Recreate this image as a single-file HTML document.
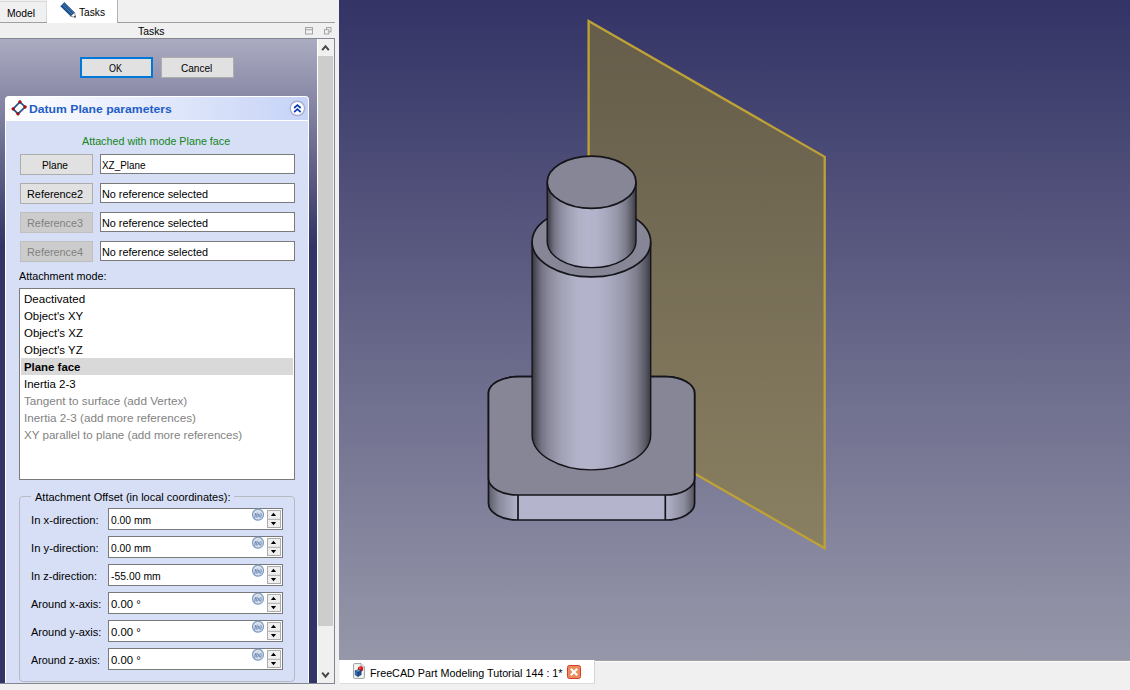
<!DOCTYPE html>
<html>
<head>
<meta charset="utf-8">
<title>FreeCAD</title>
<style>
html,body{margin:0;padding:0;}
body{width:1130px;height:690px;overflow:hidden;background:#f0f0f0;position:relative;
  font-family:"Liberation Sans",sans-serif;font-size:11px;color:#000;}
.abs{position:absolute;}
.t{position:absolute;white-space:nowrap;line-height:14px;height:14px;transform-origin:0 0;}
#tabModel{left:0;top:1px;width:47px;height:21px;border-top:1px solid #d9d9d9;border-right:1px solid #d9d9d9;box-sizing:border-box;background:#f0f0f0;}
#tabTasks{left:47px;top:0;width:70px;height:23px;background:#fff;}
#tabLine{left:0;top:22px;width:336px;height:1px;background:#a0a0a0;}
#scroll{left:0;top:38px;width:335px;height:646px;box-sizing:border-box;border:1px solid #828790;border-left:none;overflow:hidden;
  background:linear-gradient(to bottom,#ababc1 0px,#333365 207px,#333365 100%);}
#sbar{left:317px;top:39px;width:17px;height:644px;background:#f0f0f0;border-left:1px solid #fff;box-sizing:border-box;}
#thumb{left:318px;top:56px;width:15px;height:570px;background:#cdcdcd;}
.btn{position:absolute;box-sizing:border-box;background:#e1e1e1;border:1px solid #adadad;height:21px;width:73px;}
.btn.def{border:2px solid #0078d7;}
.btn.dis{background:#cccccc;border-color:#bfbfbf;}
.inp{position:absolute;box-sizing:border-box;background:#fff;border:1px solid #7a7a7a;height:20px;left:100px;width:195px;}
#hdr{left:5px;top:96px;width:304px;height:24px;box-sizing:border-box;border:1px solid #fff;border-bottom:none;border-radius:4px 4px 0 0;background:linear-gradient(to right,#ffffff 0%,#c6d3f7 100%);}
#hdrline{left:5px;top:120px;width:304px;height:1px;background:#fff;}
#box{left:5px;top:121px;width:304px;height:570px;box-sizing:border-box;background:#d6dff5;border-left:1px solid #fff;border-right:1px solid #fff;}
#list{left:19px;top:288px;width:276px;height:192px;box-sizing:border-box;border:1px solid #7a7a7a;background:#fff;}
#sel{left:21px;top:358px;width:272px;height:17px;background:#d9d9d9;}
#grp{left:19px;top:496px;width:276px;height:186px;box-sizing:border-box;border:1px solid #b8bac2;border-radius:4px;}
#grpgap{left:31px;top:496px;width:203px;height:1px;background:#d6dff5;}
.spin{position:absolute;left:108px;width:175px;height:22px;box-sizing:border-box;border:1px solid #7a7a7a;background:#fff;}
#view{left:339px;top:0;width:791px;height:660px;background:linear-gradient(to bottom,#333366 0%,#9797aa 100%);}
#doctab{left:339px;top:660px;width:256px;height:24px;background:#fff;border-left:1px solid #f7f7f7;border-right:1px solid #d4d4d4;border-bottom:1px solid #dcdcdc;box-sizing:border-box;}
</style>
</head>
<body>
<div class="abs" id="tabLine"></div>
<div class="abs" id="tabModel"></div>
<div class="abs" id="tabTasks"></div>
<div class="abs" style="left:117px;top:0px;width:1px;height:22px;background:#b2b2b2"></div>

<div class="abs" id="scroll"></div>
<div class="abs" id="sbar"></div>
<div class="abs" id="thumb"></div>

<div class="btn def" style="left:80px;top:57px;"></div>
<div class="btn" style="left:161px;top:57px;"></div>

<div class="abs" id="hdr"></div>
<div class="abs" id="hdrline"></div>
<div class="abs" id="box"></div>

<div class="btn" style="left:20px;top:154px;"></div>
<div class="inp" style="top:154px;"></div>
<div class="btn" style="left:20px;top:183px;"></div>
<div class="inp" style="top:183px;"></div>
<div class="btn dis" style="left:20px;top:212px;"></div>
<div class="inp" style="top:212px;"></div>
<div class="btn dis" style="left:20px;top:241px;"></div>
<div class="inp" style="top:241px;"></div>

<div class="abs" id="list"></div>
<div class="abs" id="sel"></div>

<div class="abs" id="grp"></div>
<div class="abs" id="grpgap"></div>
<div class="spin" style="top:508px;"></div>
<div class="spin" style="top:536px;"></div>
<div class="spin" style="top:564px;"></div>
<div class="spin" style="top:592px;"></div>
<div class="spin" style="top:620px;"></div>
<div class="spin" style="top:648px;"></div>
<svg class="abs" style="left:0;top:0;" width="339" height="690" viewBox="0 0 339 690">
<g>
<polygon points="64.4,2.3 60.3,6.2 70.6,16.3 74.6,12.4" fill="#1f4e88"/>
<polygon points="64.4,2.3 63.2,3.4 73.4,13.6 74.6,12.4" fill="#3d6a9c"/>
<line x1="62.4" y1="4.6" x2="72.5" y2="14.5" stroke="#4a88d4" stroke-width="1"/>
<polygon points="70.6,16.3 74.6,12.4 75.6,17.4" fill="#ffffff" stroke="#22324c" stroke-width="0.5"/>
<polygon points="73.9,16.9 75.2,15.6 75.6,17.4" fill="#101828"/>
</g>
<g fill="none" stroke="#a4a4a4" stroke-width="1">
<rect x="305.5" y="27.5" width="7" height="6.5"/><line x1="305.5" y1="29.7" x2="312.5" y2="29.7"/>
<rect x="326.5" y="27.5" width="4.5" height="4.3"/><rect x="324.5" y="29.7" width="4.3" height="4.3" fill="#f0f0f0"/>
</g>
<g fill="none" stroke="#454545" stroke-width="2" stroke-linejoin="miter">
<polyline points="322.2,50.2 325.5,46.2 328.8,50.2"/>
<polyline points="322.2,672.6 325.5,676.6 328.8,672.6"/>
</g>
<g>
<polygon points="19.9,101.9 25.1,107 18,113.9 13.1,108.9" fill="#ffffff" stroke="#3b74b4" stroke-width="1.65"/>
<polygon points="19.9,101.9 25.1,107 18,113.9 13.1,108.9" fill="none" stroke="#1b2c50" stroke-width="1.65" stroke-dasharray="0.5 0.7"/>
<g fill="#e00808" stroke="#3a1010" stroke-width="0.4"><circle cx="19.9" cy="101.9" r="1.4"/><circle cx="25.1" cy="107" r="1.4"/><circle cx="18" cy="113.9" r="1.4"/><circle cx="13.1" cy="108.9" r="1.4"/></g>
</g>
<g>
<circle cx="297.4" cy="108.35" r="7.2" fill="#ffffff" stroke="#a6aed0" stroke-width="1.5"/>
<g fill="none" stroke="#0a3ab0" stroke-width="1.7"><polyline points="294.1,108 297.4,105.1 300.7,108"/><polyline points="294.1,112.1 297.4,109.2 300.7,112.1"/></g>
</g>
<g>
<rect x="267.5" y="510.5" width="13" height="17" fill="#efefef" stroke="#adadad"/><line x1="267.5" y1="519.3" x2="280.5" y2="519.3" stroke="#adadad"/>
<polygon points="270.9,516 276.1,516 273.5,512.8" fill="#000"/>
<polygon points="270.9,522 276.1,522 273.5,525.2" fill="#000"/>
<circle cx="258" cy="514.65" r="5.5" fill="#d9dfe4" stroke="#789ac6" stroke-width="1.15"/>
<text x="258" y="516.8" text-anchor="middle" font-family="Liberation Serif, serif" font-style="italic" font-weight="bold" font-size="6.6" fill="#2456b0" textLength="7.6" lengthAdjust="spacingAndGlyphs">f(x)</text>
</g>
<g>
<rect x="267.5" y="538.5" width="13" height="17" fill="#efefef" stroke="#adadad"/><line x1="267.5" y1="547.3" x2="280.5" y2="547.3" stroke="#adadad"/>
<polygon points="270.9,544 276.1,544 273.5,540.8" fill="#000"/>
<polygon points="270.9,550 276.1,550 273.5,553.2" fill="#000"/>
<circle cx="258" cy="542.65" r="5.5" fill="#d9dfe4" stroke="#789ac6" stroke-width="1.15"/>
<text x="258" y="544.8" text-anchor="middle" font-family="Liberation Serif, serif" font-style="italic" font-weight="bold" font-size="6.6" fill="#2456b0" textLength="7.6" lengthAdjust="spacingAndGlyphs">f(x)</text>
</g>
<g>
<rect x="267.5" y="566.5" width="13" height="17" fill="#efefef" stroke="#adadad"/><line x1="267.5" y1="575.3" x2="280.5" y2="575.3" stroke="#adadad"/>
<polygon points="270.9,572 276.1,572 273.5,568.8" fill="#000"/>
<polygon points="270.9,578 276.1,578 273.5,581.2" fill="#000"/>
<circle cx="258" cy="570.65" r="5.5" fill="#d9dfe4" stroke="#789ac6" stroke-width="1.15"/>
<text x="258" y="572.8" text-anchor="middle" font-family="Liberation Serif, serif" font-style="italic" font-weight="bold" font-size="6.6" fill="#2456b0" textLength="7.6" lengthAdjust="spacingAndGlyphs">f(x)</text>
</g>
<g>
<rect x="267.5" y="594.5" width="13" height="17" fill="#efefef" stroke="#adadad"/><line x1="267.5" y1="603.3" x2="280.5" y2="603.3" stroke="#adadad"/>
<polygon points="270.9,600 276.1,600 273.5,596.8" fill="#000"/>
<polygon points="270.9,606 276.1,606 273.5,609.2" fill="#000"/>
<circle cx="258" cy="598.65" r="5.5" fill="#d9dfe4" stroke="#789ac6" stroke-width="1.15"/>
<text x="258" y="600.8" text-anchor="middle" font-family="Liberation Serif, serif" font-style="italic" font-weight="bold" font-size="6.6" fill="#2456b0" textLength="7.6" lengthAdjust="spacingAndGlyphs">f(x)</text>
</g>
<g>
<rect x="267.5" y="622.5" width="13" height="17" fill="#efefef" stroke="#adadad"/><line x1="267.5" y1="631.3" x2="280.5" y2="631.3" stroke="#adadad"/>
<polygon points="270.9,628 276.1,628 273.5,624.8" fill="#000"/>
<polygon points="270.9,634 276.1,634 273.5,637.2" fill="#000"/>
<circle cx="258" cy="626.65" r="5.5" fill="#d9dfe4" stroke="#789ac6" stroke-width="1.15"/>
<text x="258" y="628.8" text-anchor="middle" font-family="Liberation Serif, serif" font-style="italic" font-weight="bold" font-size="6.6" fill="#2456b0" textLength="7.6" lengthAdjust="spacingAndGlyphs">f(x)</text>
</g>
<g>
<rect x="267.5" y="650.5" width="13" height="17" fill="#efefef" stroke="#adadad"/><line x1="267.5" y1="659.3" x2="280.5" y2="659.3" stroke="#adadad"/>
<polygon points="270.9,656 276.1,656 273.5,652.8" fill="#000"/>
<polygon points="270.9,662 276.1,662 273.5,665.2" fill="#000"/>
<circle cx="258" cy="654.65" r="5.5" fill="#d9dfe4" stroke="#789ac6" stroke-width="1.15"/>
<text x="258" y="656.8" text-anchor="middle" font-family="Liberation Serif, serif" font-style="italic" font-weight="bold" font-size="6.6" fill="#2456b0" textLength="7.6" lengthAdjust="spacingAndGlyphs">f(x)</text>
</g>
</svg>

<div class="t" id="t1" style="left:7px;top:6px;font-size:11px;transform:scaleX(0.94);">Model</div>
<div class="t" id="t2" style="left:79px;top:5px;font-size:11px;transform:scaleX(0.925);">Tasks</div>
<div class="t" id="t3" style="left:138.2px;top:24px;font-size:11px;transform:scaleX(0.945);">Tasks</div>
<div class="t" id="t4" style="left:109px;top:61px;font-size:11px;transform:scaleX(0.815);">OK</div>
<div class="t" id="t5" style="left:181px;top:61px;font-size:11px;transform:scaleX(0.915);">Cancel</div>
<div class="t" id="t6" style="left:28.6px;top:102px;font-size:11px;transform:scaleX(1.107);font-weight:bold;color:#215dc6;">Datum Plane parameters</div>
<div class="t" id="t7" style="left:82px;top:134px;font-size:11px;transform:scaleX(0.977);color:#12861a;">Attached with mode Plane face</div>
<div class="t" id="t8" style="left:42px;top:158px;font-size:11.5px;transform:scaleX(0.882);">Plane</div>
<div class="t" id="t9" style="left:102px;top:158px;font-size:11.5px;transform:scaleX(0.861);">XZ_Plane</div>
<div class="t" id="t10" style="left:26.7px;top:187px;font-size:11.5px;transform:scaleX(0.944);">Reference2</div>
<div class="t" id="t11" style="left:102px;top:187px;font-size:11.5px;transform:scaleX(0.942);">No reference selected</div>
<div class="t" id="t12" style="left:26.7px;top:216px;font-size:11.5px;transform:scaleX(0.944);color:#828282;">Reference3</div>
<div class="t" id="t13" style="left:102px;top:216px;font-size:11.5px;transform:scaleX(0.942);">No reference selected</div>
<div class="t" id="t14" style="left:26.7px;top:245px;font-size:11.5px;transform:scaleX(0.944);color:#828282;">Reference4</div>
<div class="t" id="t15" style="left:102px;top:245px;font-size:11.5px;transform:scaleX(0.942);">No reference selected</div>
<div class="t" id="t16" style="left:19px;top:269px;font-size:11px;transform:scaleX(0.98);">Attachment mode:</div>
<div class="t" id="t17" style="left:24.2px;top:292px;font-size:11.5px;transform:scaleX(1.007);">Deactivated</div>
<div class="t" id="t18" style="left:24.2px;top:309px;font-size:11.5px;transform:scaleX(0.991);">Object's XY</div>
<div class="t" id="t19" style="left:24.2px;top:326px;font-size:11.5px;transform:scaleX(0.997);">Object's XZ</div>
<div class="t" id="t20" style="left:24.2px;top:343px;font-size:11.5px;transform:scaleX(0.997);">Object's YZ</div>
<div class="t" id="t21" style="left:24.2px;top:360px;font-size:11.5px;transform:scaleX(0.992);font-weight:bold;">Plane face</div>
<div class="t" id="t22" style="left:24.2px;top:377px;font-size:11.5px;transform:scaleX(0.997);">Inertia 2-3</div>
<div class="t" id="t23" style="left:24.2px;top:394px;font-size:11.5px;transform:scaleX(1.017);color:#828282;">Tangent to surface (add Vertex)</div>
<div class="t" id="t24" style="left:24.2px;top:411px;font-size:11.5px;transform:scaleX(1.019);color:#828282;">Inertia 2-3 (add more references)</div>
<div class="t" id="t25" style="left:24.2px;top:428px;font-size:11.5px;transform:scaleX(1.008);color:#828282;">XY parallel to plane (add more references)</div>
<div class="t" id="t26" style="left:35px;top:490px;font-size:11px;">Attachment Offset (in local coordinates):</div>
<div class="t" id="t27" style="left:31px;top:513px;font-size:11px;transform:scaleX(1.024);">In x-direction:</div>
<div class="t" id="t28" style="left:111px;top:513px;font-size:11px;transform:scaleX(0.935);">0.00 mm</div>
<div class="t" id="t29" style="left:31px;top:541px;font-size:11px;transform:scaleX(1.024);">In y-direction:</div>
<div class="t" id="t30" style="left:111px;top:541px;font-size:11px;transform:scaleX(0.935);">0.00 mm</div>
<div class="t" id="t31" style="left:31px;top:569px;font-size:11px;">In z-direction:</div>
<div class="t" id="t32" style="left:111px;top:569px;font-size:11px;transform:scaleX(0.947);">-55.00 mm</div>
<div class="t" id="t33" style="left:31px;top:597px;font-size:11px;">Around x-axis:</div>
<div class="t" id="t34" style="left:111px;top:597px;font-size:11px;transform:scaleX(1.031);">0.00 °</div>
<div class="t" id="t35" style="left:31px;top:625px;font-size:11px;">Around y-axis:</div>
<div class="t" id="t36" style="left:111px;top:625px;font-size:11px;transform:scaleX(1.031);">0.00 °</div>
<div class="t" id="t37" style="left:31px;top:653px;font-size:11px;transform:scaleX(0.983);">Around z-axis:</div>
<div class="t" id="t38" style="left:111px;top:653px;font-size:11px;transform:scaleX(1.031);">0.00 °</div>
<!-- covers below scroll area -->
<div class="abs" style="left:0;top:683px;width:335px;height:1px;background:#828790"></div>
<div class="abs" style="left:0;top:684px;width:339px;height:6px;background:#f0f0f0"></div>
<div class="abs" style="left:335px;top:0;width:4px;height:690px;background:#f0f0f0"></div>

<div class="abs" id="view"></div>
<svg class="abs" style="left:339px;top:0;" width="791" height="660" viewBox="339 0 791 660">
<defs>
<linearGradient id="cyl" x1="0" y1="0" x2="1" y2="0">
<stop offset="0" stop-color="#34343e"/><stop offset="0.03" stop-color="#50505c"/><stop offset="0.08" stop-color="#747486"/><stop offset="0.15" stop-color="#8c8c9e"/><stop offset="0.25" stop-color="#a2a2b6"/><stop offset="0.36" stop-color="#b0b0c6"/><stop offset="0.45" stop-color="#b4b4cc"/><stop offset="0.55" stop-color="#b2b2ca"/><stop offset="0.66" stop-color="#a8a8be"/><stop offset="0.78" stop-color="#9898ac"/><stop offset="0.88" stop-color="#7e7e8e"/><stop offset="0.95" stop-color="#5c5c68"/><stop offset="1" stop-color="#3a3a44"/>
</linearGradient>
<linearGradient id="base" gradientUnits="userSpaceOnUse" x1="488.5" y1="0" x2="694.6" y2="0">
<stop offset="0" stop-color="#5c5c68"/><stop offset="0.05" stop-color="#8a8a9c"/><stop offset="0.143" stop-color="#b4b4cc"/><stop offset="0.857" stop-color="#b4b4cc"/><stop offset="0.95" stop-color="#8a8a9c"/><stop offset="1" stop-color="#54545e"/>
</linearGradient>
</defs>
<!-- datum plane -->
<polygon points="588.6,21 824.7,156.8 824.7,548.3 588.6,412.7" fill="rgba(141,123,50,0.55)" stroke="#bfa236" stroke-width="2.3" stroke-linejoin="miter"/>
<g stroke="#14141a" stroke-width="1.7" stroke-linejoin="round">
<!-- base side -->
<rect x="488.5" y="376.7" width="206.1" height="143.3" rx="29.5" ry="16.5" fill="url(#base)"/>
<line x1="518" y1="495" x2="518" y2="520"/>
<line x1="665.3" y1="495" x2="665.3" y2="520"/>
<!-- base top -->
<rect x="488.5" y="376.7" width="206.1" height="118.3" rx="29.5" ry="16.5" fill="#868696"/>
<!-- big cylinder -->
<path d="M532.1,242 L532.1,435 A59.3,34.9 0 0 0 650.7,435 L650.7,242 Z" fill="url(#cyl)" stroke-width="1.4"/>
<ellipse cx="591.4" cy="242" rx="59.3" ry="34.9" fill="#868696"/>
<!-- small cylinder -->
<path d="M547.2,182.2 L547.2,241.6 A44.4,26.1 0 0 0 636,241.6 L636,182.2 Z" fill="url(#cyl)" stroke-width="1.4"/>
<ellipse cx="591.6" cy="182.2" rx="44.4" ry="26.1" fill="#868696"/>
</g>
</svg>

<div class="abs" style="left:595px;top:660px;width:535px;height:1px;background:#a0a0a0"></div>
<div class="abs" style="left:595px;top:661px;width:535px;height:1px;background:#fbfbfb"></div>
<div class="abs" id="doctab"></div>
<svg class="abs" style="left:339px;top:660px;" width="260" height="30" viewBox="339 660 260 30">
<path d="M353.6,664.6 Q353.6,663.6 354.6,663.6 L361,663.6 L364.4,667 L364.4,677.4 Q364.4,678.4 363.4,678.4 L354.6,678.4 Q353.6,678.4 353.6,677.4 Z" fill="#f6f6f3" stroke="#8e9496" stroke-width="0.9"/>
<path d="M361,663.6 L361,667 L364.4,667" fill="#e4e4e0" stroke="#8e9496" stroke-width="0.7"/>
<circle cx="360.5" cy="668.9" r="2.6" fill="#e01010"/>
<circle cx="359.9" cy="668.2" r="1" fill="#ff5a4a"/>
<polygon points="355.2,670.8 358,672 358,676.5 355.2,675" fill="#2f6dba" stroke="#16325c" stroke-width="0.5"/>
<polygon points="358,672 361.2,670.4 361.2,674.8 358,676.5" fill="#1f4f94" stroke="#16325c" stroke-width="0.5"/>
<polygon points="355.2,670.8 358.5,669.4 361.2,670.4 358,672" fill="#5f9ee4" stroke="#16325c" stroke-width="0.5"/>
<rect x="567.5" y="665.5" width="13" height="13" rx="2" ry="2" fill="#e98b5b" stroke="#dc3b27" stroke-width="1"/>
<g stroke="#ffffff" stroke-width="2.2" stroke-linecap="butt"><line x1="570.8" y1="668.8" x2="577.2" y2="675.2"/><line x1="577.2" y1="668.8" x2="570.8" y2="675.2"/></g>
</svg>
<div class="t" id="t39" style="left:369.8px;top:666px;font-size:11px;transform:scaleX(0.978);">FreeCAD Part Modeling Tutorial 144 : 1*</div>
</body>
</html>
